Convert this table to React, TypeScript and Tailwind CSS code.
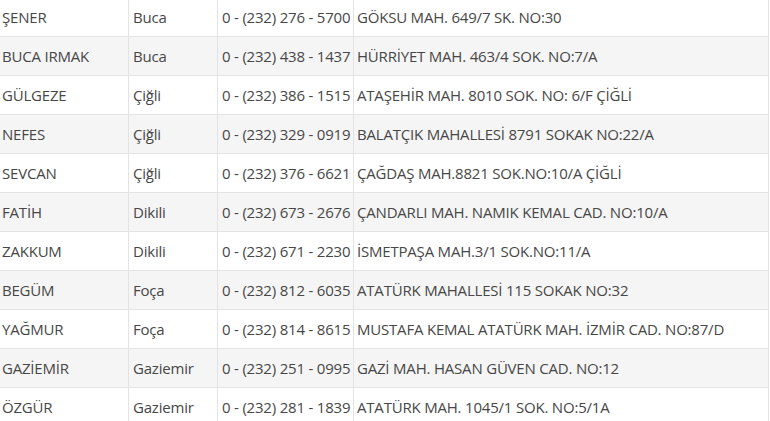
const rows: [string, string, string, string][] = [
  ["ŞENER", "Buca", "0 - (232) 276 - 5700", "GÖKSU MAH. 649/7 SK. NO:30"],
  ["BUCA IRMAK", "Buca", "0 - (232) 438 - 1437", "HÜRRİYET MAH. 463/4 SOK. NO:7/A"],
  ["GÜLGEZE", "Çiğli", "0 - (232) 386 - 1515", "ATAŞEHİR MAH. 8010 SOK. NO: 6/F ÇİĞLİ"],
  ["NEFES", "Çiğli", "0 - (232) 329 - 0919", "BALATÇIK MAHALLESİ 8791 SOKAK NO:22/A"],
  ["SEVCAN", "Çiğli", "0 - (232) 376 - 6621", "ÇAĞDAŞ MAH.8821 SOK.NO:10/A ÇİĞLİ"],
  ["FATİH", "Dikili", "0 - (232) 673 - 2676", "ÇANDARLI MAH. NAMIK KEMAL CAD. NO:10/A"],
  ["ZAKKUM", "Dikili", "0 - (232) 671 - 2230", "İSMETPAŞA MAH.3/1 SOK.NO:11/A"],
  ["BEGÜM", "Foça", "0 - (232) 812 - 6035", "ATATÜRK MAHALLESİ 115 SOKAK NO:32"],
  ["YAĞMUR", "Foça", "0 - (232) 814 - 8615", "MUSTAFA KEMAL ATATÜRK MAH. İZMİR CAD. NO:87/D"],
  ["GAZİEMİR", "Gaziemir", "0 - (232) 251 - 0995", "GAZİ MAH. HASAN GÜVEN CAD. NO:12"],
  ["ÖZGÜR", "Gaziemir", "0 - (232) 281 - 1839", "ATATÜRK MAH. 1045/1 SOK. NO:5/1A"],
];

export default function App() {
  return (
    <div className="w-[770px] h-[421px] overflow-hidden bg-white">
      <div className="mt-[-2px] w-[769px] text-[15px] tracking-[-0.2px] text-[#474747] font-['Open_Sans',sans-serif]">
        {rows.map((r, i) => (
          <div
            key={i}
            className={`flex h-[39px] border-b border-[#e3e3e3] ${i % 2 === 1 ? "bg-[#f5f5f5]" : "bg-white"}`}
          >
            <div className="w-[129px] border-r border-[#e3e3e3] pl-[2px] flex items-center whitespace-nowrap">{r[0]}</div>
            <div className="w-[89px] border-r border-[#e3e3e3] pl-[4px] flex items-center whitespace-nowrap">{r[1]}</div>
            <div className="w-[136px] border-r border-[#e3e3e3] pl-[4px] flex items-center whitespace-nowrap">{r[2]}</div>
            <div className="w-[415px] border-r border-[#e3e3e3] pl-[3px] flex items-center whitespace-nowrap">{r[3]}</div>
          </div>
        ))}
      </div>
    </div>
  );
}
